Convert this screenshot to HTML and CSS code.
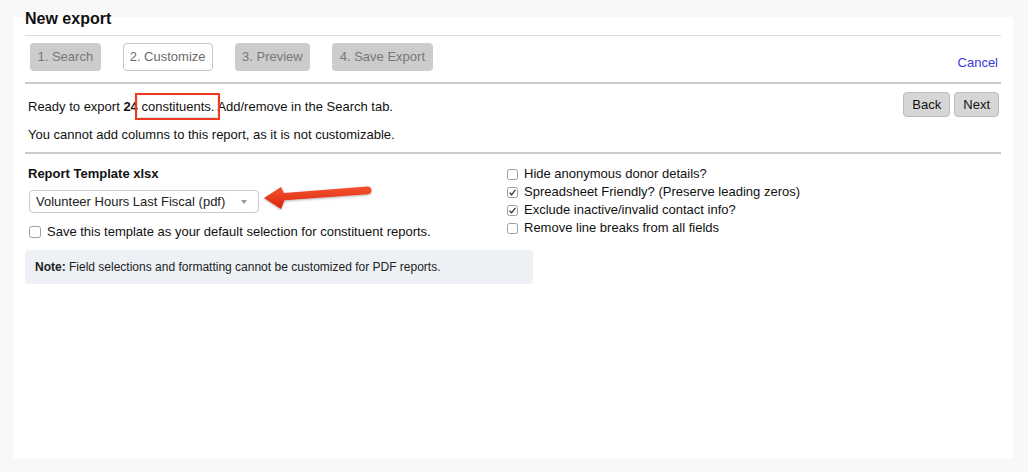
FILE: index.html
```html
<!DOCTYPE html>
<html>
<head>
<meta charset="utf-8">
<title>New export</title>
<link rel="stylesheet" href="styles.css">
</head>
<body>
<div class="panel">
  <h1 class="title">New export</h1>
  <div class="steps-row">
    <div class="steps">
      <span class="step">1. Search</span>
      <span class="step step-active">2. Customize</span>
      <span class="step">3. Preview</span>
      <span class="step">4. Save Export</span>
    </div>
    <a class="cancel" href="#">Cancel</a>
  </div>
  <div class="info-row">
    <div class="info-text">
      <p class="ready">Ready to export <b>24</b> <span class="highlight">constituents.</span> Add/remove in the Search tab.</p>
      <p class="nocustom">You cannot add columns to this report, as it is not customizable.</p>
    </div>
    <div class="nav-buttons">
      <button class="btn">Back</button>
      <button class="btn">Next</button>
    </div>
  </div>
  <div class="options">
    <div class="left-col">
      <div class="label">Report Template xlsx</div>
      <div class="select-wrap">
        <div class="select">
          <span>Volunteer Hours Last Fiscal (pdf)</span>
          <span class="caret"></span>
        </div>
        <svg class="pointer" width="130" height="40" viewBox="0 0 130 40">
          <defs>
            <linearGradient id="ag" x1="0" y1="0" x2="0" y2="1">
              <stop offset="0" stop-color="#f4532f"/>
              <stop offset="1" stop-color="#d9230f"/>
            </linearGradient>
            <filter id="sh" x="-10%" y="-30%" width="120%" height="160%">
              <feDropShadow dx="0" dy="1" stdDeviation="1" flood-color="#000" flood-opacity="0.3"/>
            </filter>
          </defs>
          <path d="M9 22 L26 11 L29 17 L112 10.5 A3.8 3.8 0 0 1 113 18.2 L29.5 24.2 L26 33 Z" fill="url(#ag)" filter="url(#sh)"/>
        </svg>
      </div>
      <label class="check-row"><span class="cb"></span>Save this template as your default selection for constituent reports.</label>
    </div>
    <div class="right-col">
      <label class="check-row"><span class="cb"></span>Hide anonymous donor details?</label>
      <label class="check-row"><span class="cb cb-on"><svg width="9" height="9" viewBox="0 0 9 9"><path d="M1.6 4.8 L3.6 6.8 L7.4 1.8" fill="none" stroke="#333" stroke-width="1.3"/></svg></span>Spreadsheet Friendly? (Preserve leading zeros)</label>
      <label class="check-row"><span class="cb cb-on"><svg width="9" height="9" viewBox="0 0 9 9"><path d="M1.6 4.8 L3.6 6.8 L7.4 1.8" fill="none" stroke="#333" stroke-width="1.3"/></svg></span>Exclude inactive/invalid contact info?</label>
      <label class="check-row"><span class="cb"></span>Remove line breaks from all fields</label>
    </div>
  </div>
  <div class="note"><b>Note:</b> Field selections and formatting cannot be customized for PDF reports.</div>
</div>
</body>
</html>
```
FILE: styles.css
```css
* { box-sizing: border-box; }
html, body { margin: 0; padding: 0; }
body {
  background: #f8f8f8;
  font-family: "Liberation Sans", Arial, Helvetica, sans-serif;
  font-size: 13px;
  color: #111;
}
.panel {
  display: flow-root;
  margin: 17px 15px 0 13px;
  width: 1000px;
  height: 441px;
  background: #fff;
  padding: 0 12px;
}
.title {
  margin: -8px 0 0;
  font-size: 16px;
  line-height: 20px;
  font-weight: bold;
  color: #111;
  padding-bottom: 6px;
  border-bottom: 1px solid #dedede;
}
.steps-row {
  display: flex;
  justify-content: space-between;
  align-items: flex-end;
  padding: 7px 3px 11px 5px;
  border-bottom: 2px solid #cacaca;
}
.steps {
  display: flex;
  gap: 22px;
}
.step {
  display: block;
  height: 28px;
  line-height: 28px;
  padding: 0 7.5px;
  background: #cccccc;
  color: #777;
  border-radius: 4px;
}
.step-active {
  background: #fff;
  border: 1.5px solid #c6c6c6;
  line-height: 25px;
  padding: 0 6px;
  color: #6a6a6a;
}
.cancel {
  color: #3a3ad8;
  text-decoration: none;
  line-height: 15px;
  margin-bottom: 1px;
}
.info-row {
  display: flex;
  justify-content: space-between;
  align-items: flex-start;
  padding: 8px 2px 0 3px;
  border-bottom: 2px solid #cacaca;
}
.info-text p {
  margin: 0;
  line-height: 18px;
}
.ready { margin-top: 6px !important; }
.nocustom { margin-top: 10px !important; margin-bottom: 8px !important; }
.highlight {
  outline: 2.5px solid #f13a1d;
  outline-offset: 1px;
  box-shadow: 0 1px 3px rgba(0,0,0,0.2);
  padding: 3px 3px;
  margin: 0 -3px;
}
.nav-buttons {
  display: flex;
  gap: 4px;
}
.btn {
  font-family: "Liberation Sans", Arial, Helvetica, sans-serif;
  font-size: 13px;
  color: #111;
  height: 25px;
  padding: 0 8px;
  background: #d6d6d6;
  border: 1px solid #bcbcbc;
  border-radius: 4px;
}
.options {
  display: grid;
  grid-template-columns: 481px 1fr;
  padding-top: 11px;
}
.left-col { padding-left: 3px; }
.label {
  font-weight: bold;
  line-height: 18px;
}
.select-wrap {
  position: relative;
  width: 230px;
  margin: 7px 0 0 1px;
}
.select {
  height: 23px;
  border: 1px solid #cbcbcb;
  border-radius: 4px;
  display: flex;
  align-items: center;
  justify-content: space-between;
  padding: 0 11px 0 6px;
  color: #222;
}
.caret {
  width: 0;
  height: 0;
  border-left: 3.5px solid transparent;
  border-right: 3.5px solid transparent;
  border-top: 4px solid #999;
}
.pointer {
  position: absolute;
  left: 226px;
  top: -14px;
}
.check-row {
  display: flex;
  align-items: center;
  line-height: 18px;
  color: #111;
}
.left-col .check-row { margin-top: 10px; padding-left: 1px; }
.cb {
  width: 11px;
  height: 11px;
  border: 1px solid #9d9d9d;
  border-radius: 2.5px;
  margin-right: 6px;
  display: flex;
  align-items: center;
  justify-content: center;
  background: #fff;
}
.left-col .cb { width: 12px; height: 12px; margin-right: 6px; }
.right-col .check-row .cb { margin-left: 1px; }
.note {
  margin-top: 9px;
  width: 508px;
  background: #edf1f5;
  border-radius: 4px;
  font-size: 12px;
  line-height: 14px;
  padding: 10px 10px;
  color: #222;
}
```
